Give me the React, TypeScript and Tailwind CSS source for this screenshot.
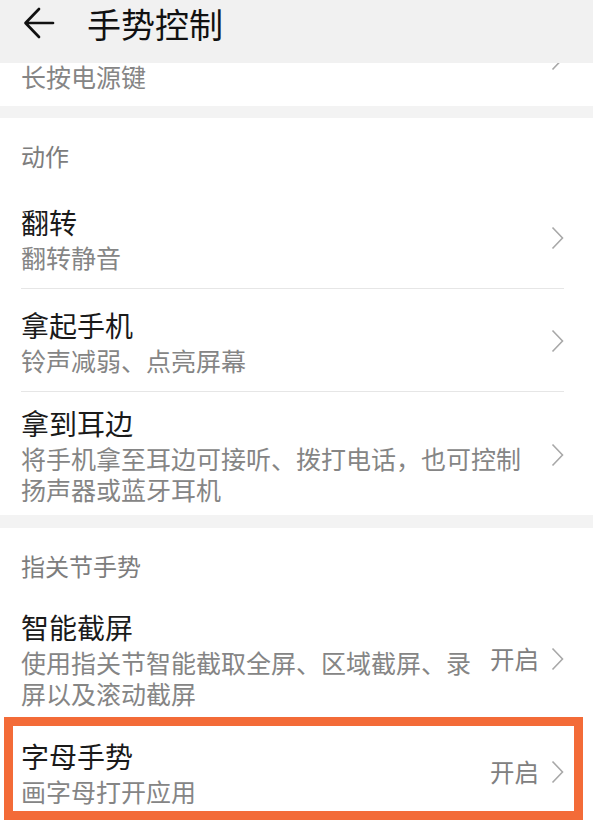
const font = { fontFamily: '"Noto Sans CJK SC", "Noto Sans", sans-serif' };

function Chevron() {
  return (
    <svg width="13" height="24" viewBox="0 0 13 24" fill="none" className="shrink-0">
      <polyline points="1.5,1.5 11.5,12 1.5,22.5" stroke="#a8a8a8" strokeWidth="1.6" strokeLinejoin="miter" />
    </svg>
  );
}

type RowProps = {
  title: string;
  sub: string;
  value?: string;
  divider?: boolean;
};

function Row({ title, sub, value, divider }: RowProps) {
  return (
    <div className="pl-[21px] pr-[29px]">
      <div className={`min-h-[103px] flex items-center pt-[12px] pb-[10px] ${divider ? "border-b border-[#e6e6e6]" : ""}`}>
        <div className="flex-1 min-w-0">
          <div className="text-[28px] leading-[38px] text-[#1a1a1a]">{title}</div>
          <div className="mt-[1px] text-[25px] leading-[31px] text-[#858585]">{sub}</div>
        </div>
        <div className={`flex items-center ${value ? "ml-[12px] gap-[12px]" : "ml-[20px]"}`}>
          {value && <span className="text-[24.5px] leading-[31px] text-[#808080]">{value}</span>}
          <Chevron />
        </div>
      </div>
    </div>
  );
}

function SectionHeader({ label }: { label: string }) {
  return (
    <div className="pl-[21px] pt-[23px] pb-[15px] text-[24px] leading-[30px] text-[#7d7d7d]">{label}</div>
  );
}

export default function App() {
  return (
    <div className="min-h-screen bg-white" style={font}>
      <div className="w-[593px]">
        <div className="h-[63px] bg-[#f1f1f1] flex items-start pt-[4px]">
          <svg width="34" height="34" viewBox="0 0 34 34" fill="none" className="ml-[22px] mt-[2px]">
            <path d="M31 17H4M17 3L3.5 17L17 31" stroke="#111" strokeWidth="2.7" strokeLinecap="round" strokeLinejoin="round" />
          </svg>
          <span className="ml-[31px] text-[34px] leading-[40px] text-[#111]">手势控制</span>
        </div>

        <div className="h-[43px] bg-white flex items-start pl-[21px] pr-[29px]">
          <div className="flex-1 text-[25px] leading-[26px] text-[#858585]">长按电源键</div>
          <div className="h-[8px] overflow-hidden flex items-end">
            <Chevron />
          </div>
        </div>

        <div className="h-[12px] bg-[#f3f3f3]" />

        <div className="bg-white">
          <SectionHeader label="动作" />
          <Row title="翻转" sub="翻转静音" divider />
          <Row title="拿起手机" sub="铃声减弱、点亮屏幕" divider />
          <Row title="拿到耳边" sub="将手机拿至耳边可接听、拨打电话，也可控制扬声器或蓝牙耳机" />
        </div>

        <div className="h-[13px] bg-[#f3f3f3]" />

        <div className="bg-white">
          <SectionHeader label="指关节手势" />
          <Row title="智能截屏" sub="使用指关节智能截取全屏、区域截屏、录屏以及滚动截屏" value="开启" />
          <div className="relative">
            <Row title="字母手势" sub="画字母打开应用" value="开启" />
            <div className="absolute left-[4px] right-[10px] top-[-2px] bottom-[2px] border-[9px] border-[#f36b38] pointer-events-none" />
          </div>
        </div>
      </div>
    </div>
  );
}
